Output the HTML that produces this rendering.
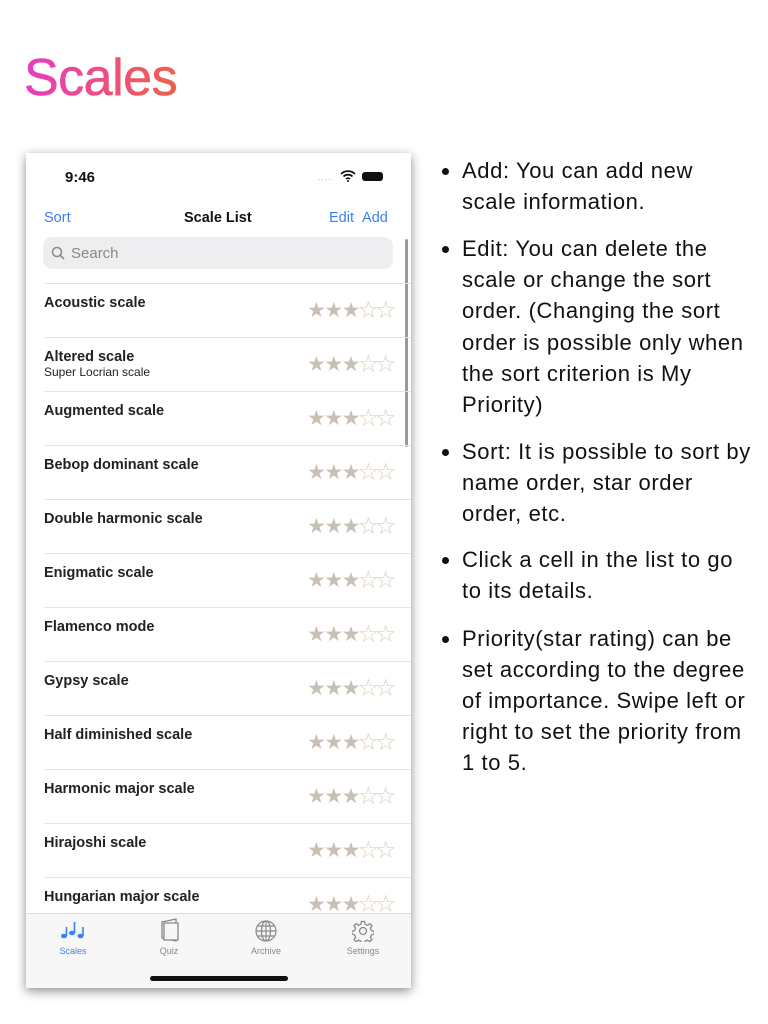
<!DOCTYPE html><html><head><style>
body{margin:0;width:768px;height:1024px;background:#fff;position:relative;overflow:hidden;font-family:"Liberation Sans",sans-serif}
.a{position:absolute;white-space:nowrap}
h1{position:absolute;left:24px;top:48px;margin:0;font-size:52px;font-weight:normal;background:linear-gradient(90deg,#e73cc0,#ef6146);-webkit-background-clip:text;color:transparent;letter-spacing:-0.5px;-webkit-text-stroke:0.6px transparent}
.ph{position:absolute;left:26px;top:153px;width:385px;height:835px;background:#fff;box-shadow:0 3px 10px rgba(0,0,0,.45);overflow:hidden}
.t{font-size:22px;color:#111;line-height:31px;letter-spacing:0.6px}
.b{position:absolute;left:442px;width:7px;height:7px;border-radius:50%;background:#111}
.n{font-size:14.5px;font-weight:bold;color:#222}
.s{font-size:12px;color:#222}
.st{font-size:21px;letter-spacing:-1.5px;color:#c9c0b5}
.st span{color:#fff;-webkit-text-stroke:0.8px #e3d6c4}
.sep{position:absolute;left:18px;right:0;height:1px;background:#e4e4e4}
.tl{font-size:9px;color:#888;text-align:center;width:80px}
</style></head><body>
<h1>Scales</h1>
<div class="ph">
<div class="a" style="left:39px;top:16px;font-size:15px;font-weight:bold;color:#111">9:46</div>
<div class="a" style="left:292px;top:19px;font-size:9px;color:#aaa;letter-spacing:1px">....</div>
<svg class="a" style="left:314px;top:17px" width="16" height="12" viewBox="0 0 16 12"><path d="M1 4a10 10 0 0 1 14 0M3.5 6.5a6.5 6.5 0 0 1 9 0M6 9a3 3 0 0 1 4 0" stroke="#111" stroke-width="1.8" fill="none"/><circle cx="8" cy="11" r="1" fill="#111"/></svg>
<div class="a" style="left:336px;top:19px;width:21px;height:9px;border-radius:3px;background:#111"></div>
<div class="a" style="left:18px;top:57px;font-size:14.5px;color:#3b82f0">Sort</div>
<div class="a" style="left:158px;top:57px;font-size:14.5px;font-weight:bold;color:#111">Scale List</div>
<div class="a" style="left:303px;top:57px;font-size:14.5px;color:#3b82f0">Edit&nbsp;&nbsp;Add</div>
<div class="a" style="left:17px;top:84px;width:350px;height:32px;border-radius:9px;background:#eeeef0"></div>
<svg class="a" style="left:25px;top:93px" width="14" height="14" viewBox="0 0 14 14"><circle cx="6" cy="6" r="4.5" stroke="#888" stroke-width="1.5" fill="none"/><path d="M9.3 9.3L13 13" stroke="#888" stroke-width="1.6"/></svg>
<div class="a" style="left:45px;top:92px;font-size:15px;color:#888">Search</div>
<div class="a" style="left:379px;top:86px;width:3px;height:208px;border-radius:2px;background:#9a9a9a"></div>
<div class="sep" style="top:130px"></div>
<div id="rows"></div>
<div class="a" style="left:0;top:760px;width:385px;height:75px;background:#f7f7f7;border-top:1px solid #ddd"></div>
<svg class="a" style="left:34px;top:766px" width="26" height="22" viewBox="0 0 26 22"><g fill="#3b82f0" stroke="#3b82f0" stroke-width="1.6"><ellipse cx="4" cy="17" rx="3" ry="2.3" stroke="none"/><path d="M6.5 17V8" fill="none"/><ellipse cx="12" cy="14" rx="3" ry="2.3" stroke="none"/><path d="M14.5 14V3" fill="none"/><ellipse cx="20.5" cy="17" rx="3" ry="2.3" stroke="none"/><path d="M23 17V8" fill="none"/></g></svg>
<div class="a tl" style="left:7px;top:793px;color:#3b82f0">Scales</div>
<svg class="a" style="left:134px;top:765px" width="20" height="24" viewBox="0 0 20 24"><path d="M2 4l14-3v22L2 20z" stroke="#888" stroke-width="1.3" fill="none"/><path d="M4 5h14v17H4z" stroke="#888" stroke-width="1.3" fill="#f7f7f7"/></svg>
<div class="a tl" style="left:103px;top:793px">Quiz</div>
<svg class="a" style="left:229px;top:767px" width="22" height="22" viewBox="0 0 22 22"><g stroke="#888" stroke-width="1.2" fill="none"><circle cx="11" cy="11" r="10"/><ellipse cx="11" cy="11" rx="4.5" ry="10"/><path d="M11 1v20M1 11h20M3 6h16M3 16h16"/></g></svg>
<div class="a tl" style="left:200px;top:793px">Archive</div>
<svg class="a" style="left:326px;top:767px" width="22" height="22" viewBox="0 0 22 22"><g stroke="#888" stroke-width="1.3" fill="none"><circle cx="11" cy="11" r="3.5"/><path d="M9.5 1.5h3l.6 2.8 2.4 1 2.4-1.6 2.1 2.1-1.6 2.4 1 2.4 2.8.6v3l-2.8.6-1 2.4 1.6 2.4-2.1 2.1-2.4-1.6-2.4 1-.6 2.8h-3l-.6-2.8-2.4-1-2.4 1.6-2.1-2.1 1.6-2.4-1-2.4-2.8-.6v-3l2.8-.6 1-2.4-1.6-2.4 2.1-2.1 2.4 1.6 2.4-1z"/></g></svg>
<div class="a tl" style="left:297px;top:793px">Settings</div>
<div class="a" style="left:124px;top:823px;width:138px;height:5px;border-radius:3px;background:#111"></div>
</div>
<script>
var n=["Acoustic scale","Altered scale","Augmented scale","Bebop dominant scale","Double harmonic scale","Enigmatic scale","Flamenco mode","Gypsy scale","Half diminished scale","Harmonic major scale","Hirajoshi scale","Hungarian major scale"],h="";
n.forEach(function(x,i){var y=142+54*i;h+='<div class="a n" style="left:18px;top:'+y+'px">'+x+'</div>';
if(i==1)h+='<div class="a s" style="left:18px;top:'+(y+16)+'px">Super Locrian scale</div>';
h+='<div class="a st" style="left:281px;top:'+(y+3)+'px">★★★<span>★★</span></div>';
if(i<11)h+='<div class="sep" style="top:'+(y+42)+'px"></div>';});
document.getElementById("rows").outerHTML=h;
</script>
<div class="b" style="top:168px"></div><div class="a t" style="left:462px;top:155px">Add: You can add new</div><div class="a t" style="left:462px;top:186px">scale information.</div>
<div class="b" style="top:246px"></div>
<div class="a t" style="left:462px;top:233px">Edit: You can delete the</div>
<div class="a t" style="left:462px;top:264px">scale or change the sort</div>
<div class="a t" style="left:462px;top:295px">order. (Changing the sort</div>
<div class="a t" style="left:462px;top:327px">order is possible only when</div>
<div class="a t" style="left:462px;top:358px">the sort criterion is My</div>
<div class="a t" style="left:462px;top:389px">Priority)</div>
<div class="b" style="top:449px"></div>
<div class="a t" style="left:462px;top:436px">Sort: It is possible to sort by</div>
<div class="a t" style="left:462px;top:467px">name order, star order</div>
<div class="a t" style="left:462px;top:498px">order, etc.</div>
<div class="b" style="top:557px"></div>
<div class="a t" style="left:462px;top:544px">Click a cell in the list to go</div>
<div class="a t" style="left:462px;top:575px">to its details.</div>
<div class="b" style="top:636px"></div>
<div class="a t" style="left:462px;top:623px">Priority(star rating) can be</div>
<div class="a t" style="left:462px;top:654px">set according to the degree</div>
<div class="a t" style="left:462px;top:685px">of importance. Swipe left or</div>
<div class="a t" style="left:462px;top:716px">right to set the priority from</div>
<div class="a t" style="left:462px;top:747px">1 to 5.</div>
</body></html>
